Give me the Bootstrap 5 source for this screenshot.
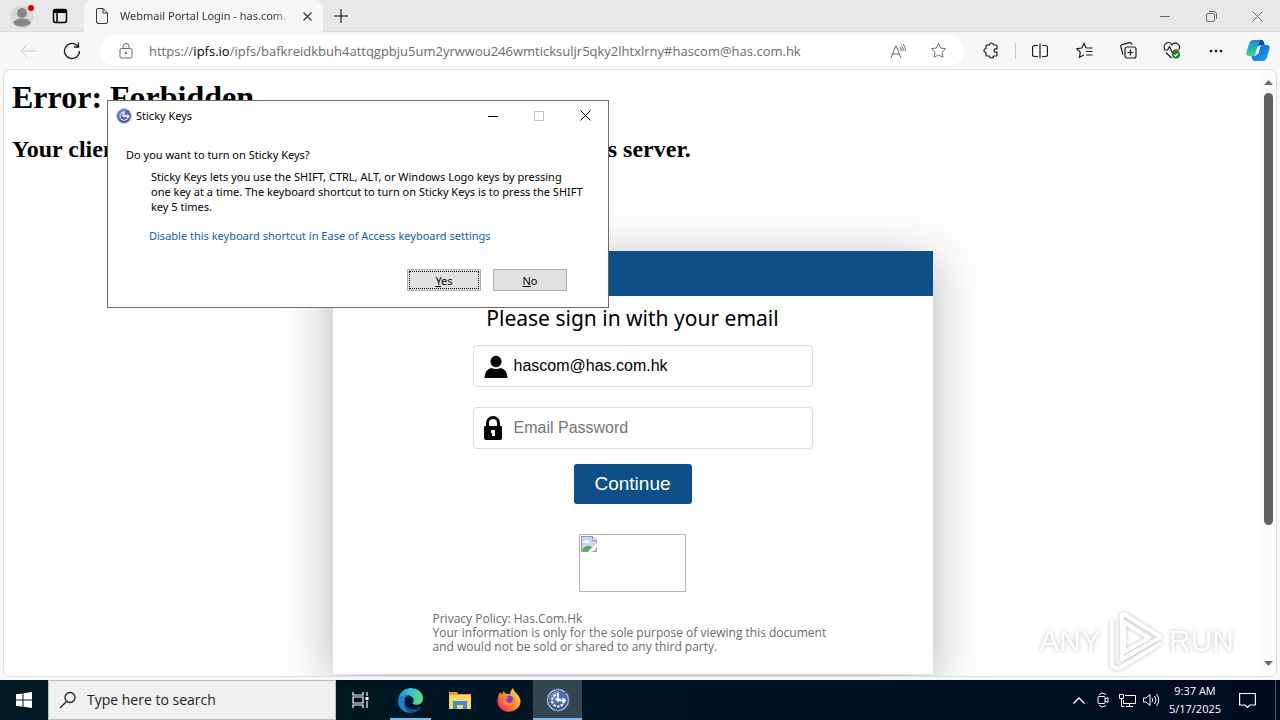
<!DOCTYPE html>
<html lang="en">
<head>
<meta charset="utf-8">
<meta name="viewport" content="width=device-width, initial-scale=1">
<title>Desktop session</title>
<link rel="stylesheet" href="https://cdn.jsdelivr.net/npm/bootstrap@5.3.0/dist/css/bootstrap.min.css">
<style>
  :root { --ui: "Open Sans", "Noto Sans", sans-serif; --small-ui: "Noto Sans", "Open Sans", sans-serif; --blue: #0e4f8a; }
  body { font-family: var(--ui); font-size: 12px; line-height: 16px; color: #000; background: #f7f7f7; }
  button { border: 0; background: none; padding: 0; color: inherit; }
  svg { display: block; flex: none; }
  svg:not([fill]) { fill: none; }
  svg:not([stroke]) { stroke: currentColor; }
  .ico { display: flex; align-items: center; justify-content: center; flex: none; }

  .titlebar { height: 32px; background: #e8e8e8; border-bottom: 1px solid #dcdcdc; }
  .titlebar .ico { height: 32px; }
  .w-profile { width: 44px; }
  .w-tabactions { width: 32px; margin-right: 8px; }
  .w-win { width: 46px; color: #6b6b6b; }
  .browser-tab { width: 239px; height: 32px; background: #f7f7f7; border-radius: 8px 8px 0 0; color: #333; }
  .w-favicon { width: 28px; }
  .w-close { width: 26px; }
  .w-plus { width: 36px; }
  .tab-title { width: 174px; font: 11px/16px var(--small-ui); -webkit-mask-image: linear-gradient(90deg, #000 88%, transparent); mask-image: linear-gradient(90deg, #000 88%, transparent); }

  .toolbar { height: 37px; color: #1c1c1c; padding: 0 2px 0 6px; }
  .w-tool { width: 44px; height: 32px; }
  .w-copilot { width: 40px; }
  .tool-rule { width: 1px; height: 16px; background: #c8c8c8; margin: 0 2px; }
  .address { height: 31px; border-radius: 16px; background: #fff; margin: 0 5px 0 6px; padding: 0 6px 0 10px; color: #666; }
  .address a { font-size: 13px; line-height: 20px; color: #6c6c6c; }
  .address strong { font-weight: 400; color: #000; }
  .w-lock { width: 32px; margin-right: 3px; }
  .w-pill { width: 40px; height: 30px; }

  .viewport { margin: 0 3px 3px 3px; border: 1px solid #dedede; border-radius: 8px; background: #fff; min-height: 0; overflow: hidden; }
  .page { font-family: "Liberation Serif", serif; overflow: hidden; }
  .page h1 { font-size: 32px; line-height: 38px; font-weight: 700; margin: 8px 8px 19px; }
  .page h2 { font-size: 24px; line-height: 28px; font-weight: 700; margin: 0 8px 88px; }
  .login { width: 600px; max-width: 100%; background: #fff; box-shadow: 0 10px 50px 0 rgba(0,0,0,.3); }
  .login-head { height: 45px; background: var(--blue); }
  .login-body { padding: 7px 100px 20px; font-family: var(--ui); }
  .login h3 { font: 400 21px/30px var(--small-ui); margin: 0 0 12px; }
  .field { height: 42px; margin: 0 20px 20px 40px; border: 1px solid #dcdcdc; border-radius: 4px; padding: 0 10px; }
  .field label { width: 30px; color: #000; }
  .field input { border: 0; outline: 0; min-width: 0; padding: 0; font: 16px/24px "Liberation Sans", Arial, sans-serif; color: #000; }
  .field input::placeholder { color: #757575; opacity: 1; }
  .field-last { margin-bottom: 15px; }
  .go { width: 118px; height: 40px; border-radius: 3px; background: var(--blue); color: #fff; font: 19px/24px "Liberation Sans", Arial, sans-serif; }
  .missing { width: 107px; height: 58px; border: 1px solid #b5b5b5; margin: 30px auto 20px; padding: 1px; }
  .legal { font-size: 12px; line-height: 14px; color: #6a6a6a; margin: 0; white-space: nowrap; }
  .scroller { width: 15px; background: #fcfcfc; padding: 8px 0; color: #6e6e6e; }
  .thumb { width: 9px; height: 432px; border-radius: 5px; background: #616161; margin-top: 7px; }

  .sticky-win { position: absolute; left: 107px; top: 100px; width: 502px; height: 208px; background: #fff; border: 1px solid #6a6a6a; font: 11px/15px var(--small-ui); }
  .sticky-title { height: 29px; padding-left: 8px; }
  .sticky-body { padding: 17px 16px 0 18px; }
  .sticky-body p { margin: 0; }
  .sticky-text { padding: 7px 0 14px 25px; }
  .sticky-link { margin-left: 23px; color: #0a5fc0; }
  .sticky-actions { margin-top: 26px; padding-right: 25px; gap: 12px; }
  .classic { width: 74px; height: 22px; border: 1px solid #adadad; background: #e1e1e1; padding: 1px; }
  .classic span { display: block; line-height: 18px; border: 1px solid transparent; height: 18px; }
  .classic-focus span { border: 1px dotted #000; }

  .watermark { position: absolute; right: 46px; bottom: 46px; gap: 5px; color: #fff; pointer-events: none; filter: drop-shadow(0 0 2px rgba(0,0,0,.25)); font: 30px/66px "Liberation Sans", Arial, sans-serif; }

  .taskbar { height: 40px; background: linear-gradient(90deg, #001820, #001522 45%, #000b20); color: #fff; }
  .search { width: 288px; height: 40px; background: #f0f0f0; border: 1px solid #bdbdbd; padding-left: 10px; color: #222; gap: 10px; }
  .search input { border: 0; outline: 0; background: none; padding: 0; min-width: 0; font: 14px/20px var(--ui); }
  .search input::placeholder { color: #222; opacity: 1; }
  .w-task { width: 49px; height: 40px; }
  .w-start { width: 48px; height: 40px; }
  .running { box-shadow: inset 0 -2px #76b9ed; width: 41px; margin: 0 4px 0 5px; }
  .current { background: #334650; box-shadow: inset 0 -2px #76b9ed; }
  .w-tray { width: 24px; height: 40px; }
  .clock { width: 64px; font-size: 11px; line-height: 18px; }
  .w-note { width: 40px; height: 40px; }
  .peek { width: 5px; height: 40px; border-left: 1px solid #4b5563; margin-left: 8px; }
</style>
</head>
<body class="vh-100 d-flex flex-column overflow-hidden position-relative">

<svg width="0" height="0" class="position-absolute" aria-hidden="true">
  <defs>
    <linearGradient id="orb" x1="0" y1="0" x2="0" y2="1"><stop offset="0" stop-color="#7d9fe0"/><stop offset="1" stop-color="#2b4a9c"/></linearGradient>
    <symbol id="ease" viewBox="0 0 24 24">
      <circle cx="12" cy="12" r="11" fill="#cfd8ea" stroke="#7c8eb8"/>
      <circle cx="12" cy="12" r="9.4" fill="url(#orb)" stroke="#2c4689"/>
      <circle cx="12" cy="12.500" r="6" fill="none" stroke="#fff" stroke-width="2" stroke-dasharray="2.600 1.200"/>
      <path d="M13 4v8.500h7V4z" fill="#4a6cb8" stroke="none"/>
      <path d="M12 5v7.500h7M9.500 10.500l2.500 2.500 2.500-2.500M16.500 10l2.800 2.500-2.800 2.500" fill="none" stroke="#fff" stroke-width="1.600"/>
    </symbol>
  </defs>
</svg>

<header>
  <div class="titlebar d-flex">
    <button class="ico w-profile" aria-label="Profile">
      <svg width="26" height="26" viewBox="0 0 26 26" stroke="none"><circle cx="13" cy="14" r="11.500" fill="#d8d8d8"/><circle cx="13" cy="10" r="5" fill="#8b8585"/><ellipse cx="13" cy="19.500" rx="8.500" ry="4" fill="#8b8585"/><circle cx="22" cy="5" r="3" fill="#d90000"/></svg>
    </button>
    <button class="ico w-tabactions" aria-label="Tab actions">
      <svg width="16" height="16" viewBox="0 0 16 16" stroke="#000" stroke-width="1.500"><rect x="1.500" y="1.500" width="13" height="13" rx="2"/><path d="M2 3.500h12" stroke-width="3"/><path d="M5 4v10"/></svg>
    </button>
    <div class="browser-tab d-flex align-items-center ps-1">
      <span class="ico w-favicon me-1"><svg width="14" height="16" viewBox="0 0 14 16"><path d="M1.500 2A1.500 1.500 0 0 1 3 .5h5l4.500 4.500v9A1.500 1.500 0 0 1 11 15.500H3A1.500 1.500 0 0 1 1.500 14zM8 .5V5h4.500"/></svg></span>
      <span class="tab-title text-nowrap overflow-hidden">Webmail Portal Login - has.com.</span>
      <button class="ico w-close" aria-label="Close tab"><svg width="9" height="9" viewBox="0 0 9 9" stroke-width="1.200"><path d="M.5.5l8 8M8.500.5l-8 8"/></svg></button>
    </div>
    <button class="ico w-plus" aria-label="New tab"><svg width="14" height="14" viewBox="0 0 14 14"><path d="M7 0v14M0 7h14"/></svg></button>
    <div class="d-flex ms-auto">
      <button class="ico w-win" aria-label="Minimize"><svg width="10" height="10" viewBox="0 0 10 10"><path d="M0 5.500h10"/></svg></button>
      <button class="ico w-win" aria-label="Restore"><svg width="11" height="11" viewBox="0 0 11 11"><rect x=".5" y="2.500" width="8" height="8" rx="1.500"/><path d="M3 .5h5a2.500 2.500 0 0 1 2.500 2.500v5"/></svg></button>
      <button class="ico w-win" aria-label="Close"><svg width="11" height="11" viewBox="0 0 11 11"><path d="M.5.5l10 10M10.500.5l-10 10"/></svg></button>
    </div>
  </div>
  <div class="toolbar d-flex align-items-center">
    <button class="ico w-tool" aria-label="Back"><svg width="16" height="14" viewBox="0 0 16 14" stroke="#c6c6c6"><path d="M16 7H1M7 1L1 7l6 6"/></svg></button>
    <button class="ico w-tool" aria-label="Refresh"><svg width="18" height="18" viewBox="0 0 18 18" stroke-width="1.300"><path d="M16.500 9A7.500 7.500 0 1 1 14 3.400L15.500 5M15.500.5V5H11"/></svg></button>
    <div class="address d-flex align-items-center flex-fill overflow-hidden">
      <span class="ico w-lock"><svg width="14" height="16" viewBox="0 0 14 16"><rect x="1" y="5.500" width="12" height="9.500" rx="1.500"/><path d="M4 5.500V3.500a3 3 0 0 1 6 0v2"/><circle cx="7" cy="10" r=".8" fill="currentColor"/></svg></span>
      <a class="text-decoration-none text-nowrap ps-1" href="#">https://<strong>ipfs.io</strong>/ipfs/bafkreidkbuh4attqgpbju5um2yrwwou246wmticksuljr5qky2lhtxlrny#hascom@has.com.hk</a>
      <button class="ico w-pill ms-auto" aria-label="Read aloud"><svg width="17" height="16" viewBox="0 0 17 16"><path d="M1 15L5.500 3h.6L11 15M2.500 11h7M10 4q1.500 1.500 1 4M11.500 2.500q2.200 2.500 1.500 5.500M13 1q3 3 2.500 7"/></svg></button>
      <button class="ico w-pill" aria-label="Favorite"><svg width="17" height="17" viewBox="0 0 18 18"><path d="M9 1.500l2.300 4.900 5.200.7-3.800 3.700.9 5.300L9 13.600l-4.600 2.500.9-5.300L1.500 7.100l5.200-.7z"/></svg></button>
    </div>
    <button class="ico w-tool" aria-label="Extensions"><svg width="17" height="17" viewBox="0 0 17 17" stroke-width="1.200"><path d="M4 3h2.500a2 2 0 1 1 4 0H13a1 1 0 0 1 1 1v3q-3-.6-3 1.500t3 1.500v3a1 1 0 0 1-1 1h-2.500a2 2 0 0 1-4 0H4a1 1 0 0 1-1-1v-2.500a2 2 0 1 1 0-4V4a1 1 0 0 1 1-1z" stroke-linejoin="round"/></svg></button>
    <span class="tool-rule"></span>
    <button class="ico w-tool" aria-label="Split screen"><svg width="16" height="16" viewBox="0 0 16 16" stroke-width="1.200"><path d="M6 2.500H2.500a2 2 0 0 0-2 2v7a2 2 0 0 0 2 2H6M10 2.500h3.500a2 2 0 0 1 2 2v7a2 2 0 0 1-2 2H10M8 .5v15"/></svg></button>
    <button class="ico w-tool" aria-label="Favorites"><svg width="17" height="17" viewBox="0 0 17 17" stroke-width="1.200"><path d="M10 6L8 1.500 5.700 6l-5 .7 3.600 3.600-.8 5L8 13M10 6h6.500M10 9.500h6.500M10 13h6.500"/></svg></button>
    <button class="ico w-tool" aria-label="Collections"><svg width="17" height="17" viewBox="0 0 17 17" stroke-width="1.200"><path d="M3 12.500L.9 5a2 2 0 0 1 1.400-2.400L9.500.7A2 2 0 0 1 12 2.800"/><rect x="5" y="5" width="11" height="11" rx="2"/><path d="M10.500 7.500v6M7.500 10.500h6"/></svg></button>
    <button class="ico w-tool" aria-label="Browser essentials"><svg width="18" height="17" viewBox="0 0 18 17" stroke-width="1.200"><path d="M1.700 7A4.200 4.200 0 0 1 9 2.800 4.200 4.200 0 0 1 16.200 7M.5 8h4L6.500 4.500l3 6.500 2-3h5M3 10.500L8.500 16"/><circle cx="13" cy="12.500" r="4" fill="#188018" stroke="none"/><path d="M11 12.700l1.400 1.400L15 11.500" stroke="#fff"/></svg></button>
    <button class="ico w-tool" aria-label="Settings and more"><svg width="16" height="4" viewBox="0 0 16 4" stroke="none" fill="#111"><circle cx="3" cy="2" r="1.300"/><circle cx="8" cy="2" r="1.300"/><circle cx="13" cy="2" r="1.300"/></svg></button>
    <button class="ico w-copilot" aria-label="Copilot"><svg width="24" height="23" viewBox="0 0 24 23" stroke="none">
      <defs><linearGradient id="c1" x1="0" y1="0" x2="0" y2="1"><stop offset="0" stop-color="#2a7fe0"/><stop offset=".5" stop-color="#19b3c4"/><stop offset="1" stop-color="#52d08a"/></linearGradient><linearGradient id="c2" x1="0" y1="0" x2="1" y2="1"><stop offset="0" stop-color="#0a5cd0"/><stop offset="1" stop-color="#1fa5f5"/></linearGradient></defs>
      <path d="M7 1h8q2 0 2.700 2l.8 2.500h-3q-2 0-2.700 2L10 15q-.7 2-3 2H3Q-.5 17 .5 13L3.500 3.500Q4.500 1 7 1z" fill="url(#c1)"/>
      <path d="M14 .8h1q2 0 2.700 2.200l1 3h-3.500q-2 0-2.500 1.500z" fill="#144a98"/>
      <path d="M17.500 6H21q3.500 0 2.500 4l-3 9.500Q19.500 22 17 22H9q-2 0-2.700-2L5.500 17h3q2 0 2.700-2L14 8q.7-2 3.500-2z" fill="url(#c2)"/>
      <path d="M11.500 7.500h3l-2.300 7.500h-3z" fill="#fff"/></svg></button>
  </div>
</header>

<main class="viewport flex-fill d-flex">
  <div class="page flex-fill">
    <h1>Error: Forbidden</h1>
    <h2>Your client does not have permission to get URL / from this server.</h2>
    <section class="login mx-auto">
      <div class="login-head"></div>
      <div class="login-body">
        <h3 class="text-center text-nowrap">Please sign in with your email</h3>
        <div class="field d-flex align-items-center">
          <label for="mail" aria-label="Email"><svg width="24" height="24" viewBox="0 0 24 24" fill="#000" stroke="none"><ellipse cx="12" cy="7.500" rx="5.500" ry="5.800"/><path d="M.5 24q0-8.500 7-10 4.500 2 9 0 7 1.500 7 10z"/></svg></label>
          <input id="mail" class="flex-fill" type="text" value="hascom@has.com.hk" readonly>
        </div>
        <div class="field field-last d-flex align-items-center">
          <label for="pass" aria-label="Password"><svg width="18" height="24" viewBox="0 0 18 24" fill="#000" stroke="none"><path fill-rule="evenodd" d="M2 10V7a7 7 0 0 1 14 0v3h1a1 1 0 0 1 1 1v11a2 2 0 0 1-2 2H2a2 2 0 0 1-2-2V11a1 1 0 0 1 1-1zM5 10h8V7a4 4 0 0 0-8 0z"/><path d="M7 14h4v6H8v-3H7z" fill="#fff"/></svg></label>
          <input id="pass" class="flex-fill" type="password" placeholder="Email Password" readonly>
        </div>
        <button type="button" class="go d-block mx-auto">Continue</button>
        <div class="missing"><svg width="16" height="16" viewBox="0 0 16 16" stroke="none"><path d="M.5.500h11l4 4v11H.5z" fill="#c3d6f7" stroke="#9a9a9a"/><path d="M11.500.5v4h4z" fill="#fff" stroke="#9a9a9a"/><path d="M2 7q0-2 2-2 1-2 3 0 2 0 1.500 2z" fill="#fff"/><path d="M1 15q2-6 8-5l2 1-4 4z" fill="#4caf50"/><path d="M7 16l9-9v4l-5 5z" fill="#fff"/></svg></div>
        <p class="legal">Privacy Policy: Has.Com.Hk<br>Your information is only for the sole purpose of viewing this document<br>and would not be sold or shared to any third party.</p>
      </div>
    </section>
  </div>
  <div class="scroller d-flex flex-column align-items-center">
    <svg width="9" height="8" viewBox="0 0 9 8" fill="currentColor" stroke="none"><path d="M4.500 2L9 7H0z"/></svg>
    <div class="thumb"></div>
    <svg class="mt-auto" width="9" height="8" viewBox="0 0 9 8" fill="currentColor" stroke="none"><path d="M4.500 6L9 1H0z"/></svg>
  </div>
</main>

<section class="sticky-win" aria-label="Sticky Keys">
  <div class="sticky-title d-flex align-items-center">
    <svg width="16" height="16"><use href="#ease"/></svg>
    <span class="ms-1 me-auto">Sticky Keys</span>
    <button class="ico w-win text-black" aria-label="Minimize"><svg width="10" height="10" viewBox="0 0 10 10"><path d="M0 5.500h10"/></svg></button>
    <button class="ico w-win" aria-label="Maximize" disabled><svg width="10" height="10" viewBox="0 0 10 10" stroke="#c4c4c4"><path d="M.5.500h9v9h-9z"/></svg></button>
    <button class="ico w-win text-black" aria-label="Close"><svg width="11" height="11" viewBox="0 0 11 11"><path d="M.5.5l10 10M10.500.5l-10 10"/></svg></button>
  </div>
  <div class="sticky-body">
    <p>Do you want to turn on Sticky Keys?</p>
    <p class="sticky-text text-nowrap">Sticky Keys lets you use the SHIFT, CTRL, ALT, or Windows Logo keys by pressing<br>one key at a time. The keyboard shortcut to turn on Sticky Keys is to press the SHIFT<br>key 5 times.</p>
    <a class="sticky-link text-decoration-none" href="#">Disable this keyboard shortcut in Ease of Access keyboard settings</a>
    <div class="sticky-actions d-flex justify-content-end">
      <button class="classic classic-focus"><span><u>Y</u>es</span></button>
      <button class="classic"><span><u>N</u>o</span></button>
    </div>
  </div>
</section>

<div class="watermark d-flex align-items-center">
  <span>ANY</span>
  <svg width="58" height="62" viewBox="0 0 58 62" stroke="#fff" stroke-width="4" stroke-linejoin="round"><path d="M16 3l39 24M16 3v46l39-22M18 12v30l25-14zM6 10v46l6 3 43-26"/></svg>
  <span>RUN</span>
</div>

<footer class="taskbar d-flex align-items-center">
  <button class="ico w-start" aria-label="Start"><svg width="16" height="16" viewBox="0 0 16 16" fill="#fff" stroke="none"><path d="M0 2.300L6.500 1.400v6.200H0zM7.500 1.200L16 0v7.600H7.500zM0 8.500h6.500v6.200L0 13.800zM7.500 8.500H16V16l-8.500-1.200z"/></svg></button>
  <div class="search d-flex align-items-center">
    <label for="find" aria-label="Search"><svg width="18" height="18" viewBox="0 0 18 18" stroke-width="1.300"><circle cx="11" cy="6.500" r="5"/><path d="M7.500 10.500L1 17"/></svg></label>
    <input id="find" class="flex-fill" type="text" placeholder="Type here to search">
  </div>
  <button class="ico w-task" aria-label="Task view"><svg width="17" height="16" viewBox="0 0 17 16" stroke-width="1.200"><path d="M1 0v3h10V0M1 16v-3h10v3M1 5h10v6H1zM15 0v4M15 9v7"/><path d="M13.500 5h3v3h-3z" fill="#fff" stroke="none"/></svg></button>
  <button class="ico w-task running" aria-label="Edge"><svg width="25" height="25" viewBox="0 0 24 24" stroke="none">
    <defs><linearGradient id="e1" x1="0" y1="0" x2="1" y2="0"><stop offset="0" stop-color="#1d8fdc"/><stop offset=".5" stop-color="#35c1d4"/><stop offset="1" stop-color="#5fe070"/></linearGradient></defs>
    <path d="M0 13Q1 1 12 0q11 .5 12 9.500.2 6.500-6.500 6.500-3.500 0-3.500-1.500 1-1 1-3Q14.500 8 10 7 3 6.500 0 13z" fill="url(#e1)"/>
    <path d="M0 12Q3 6.500 10 7q-4 2-4 7 1 8 9 8.500-3 2-8 .5Q0 20 0 12z" fill="#1b7fd0"/>
    <path d="M9 9q-4 5 0 9.500 6 4 12.500 0 1-.3.500.5-4 5-10 5-6-2-6-10 .5-3 3-5z" fill="#124f9c"/></svg></button>
  <button class="ico w-task" aria-label="File Explorer"><svg width="22" height="19" viewBox="0 0 22 19" stroke="none"><path d="M0 1h8l1.500 2H22v4H0z" fill="#e0a021"/><path d="M0 4h22v14H0z" fill="#fbd667"/><path d="M4 18v-7q0-1 1-1h12q1 0 1 1v7h-4v-4H8v4z" fill="#3c8fd0"/></svg></button>
  <button class="ico w-task" aria-label="Firefox"><svg width="24" height="24" viewBox="0 0 24 24" stroke="none">
    <defs><linearGradient id="f1" x1="1" y1="0" x2="0" y2="1"><stop offset="0" stop-color="#fff04a"/><stop offset=".45" stop-color="#ff9a22"/><stop offset=".8" stop-color="#ff3f4f"/><stop offset="1" stop-color="#e02080"/></linearGradient></defs>
    <path d="M3 4l2 2.500L6.500 3 9 6q2.500-.5 4 .5Q13 3 16 0q.5 3 4 6 3.500 3.500 3.500 7.500A11.500 10.500 0 0 1 .5 13Q.5 8 3 4z" fill="url(#f1)"/><circle cx="12" cy="13" r="5.500" fill="#7d3de0"/><path d="M6 9q3-2 6 1-3 .3-3 2.500 1 3 5 2 3-2 1.500-6 4 4 1 8-5 4-9.500-.5Q5 12.500 6 9z" fill="#ff8a22"/></svg></button>
  <button class="ico w-task current" aria-label="Sticky Keys"><svg width="24" height="24"><use href="#ease"/></svg></button>
  <div class="d-flex align-items-center ms-auto">
    <button class="ico w-tray" aria-label="Hidden icons"><svg width="12" height="7" viewBox="0 0 12 7" stroke-width="1.300"><path d="M.5 6.500L6 1l5.500 5.500"/></svg></button>
    <button class="ico w-tray" aria-label="Meet now"><svg width="12" height="16" viewBox="0 0 12 16"><rect x="1" y="4.500" width="7" height="7" rx="1"/><path d="M8 7l3-1.500v5L8 9M2 2.500q3.500-3 7 0M2 13.500q3.500 3 7 0"/></svg></button>
    <button class="ico w-tray" aria-label="Network"><svg width="17" height="15" viewBox="0 0 17 15"><path d="M6 2.500h10.500v8H4.500V7M10.500 10.500v3M7 13.500h7M.5 1.500h4v4h-4zM2.500 6v7.500h3"/></svg></button>
    <button class="ico w-tray" aria-label="Volume"><svg width="17" height="14" viewBox="0 0 17 14"><path d="M.5 5v4h2.500l4 3.500v-11L3 5zM9 5q1.500 2 0 4M11.500 3q3 4 0 8M13.500 1q4.500 6 0 12"/></svg></button>
    <div class="clock text-center">9:37 AM<br>5/17/2025</div>
    <button class="ico w-note" aria-label="Notifications"><svg width="17" height="17" viewBox="0 0 17 17" stroke-width="1.200"><path d="M.6 1.500h15.800v11.500H11L8.500 15.500 6 13H.6z"/></svg></button>
    <span class="peek"></span>
  </div>
</footer>

<script src="https://cdn.jsdelivr.net/npm/bootstrap@5.3.0/dist/js/bootstrap.bundle.min.js"></script>
</body>
</html>
